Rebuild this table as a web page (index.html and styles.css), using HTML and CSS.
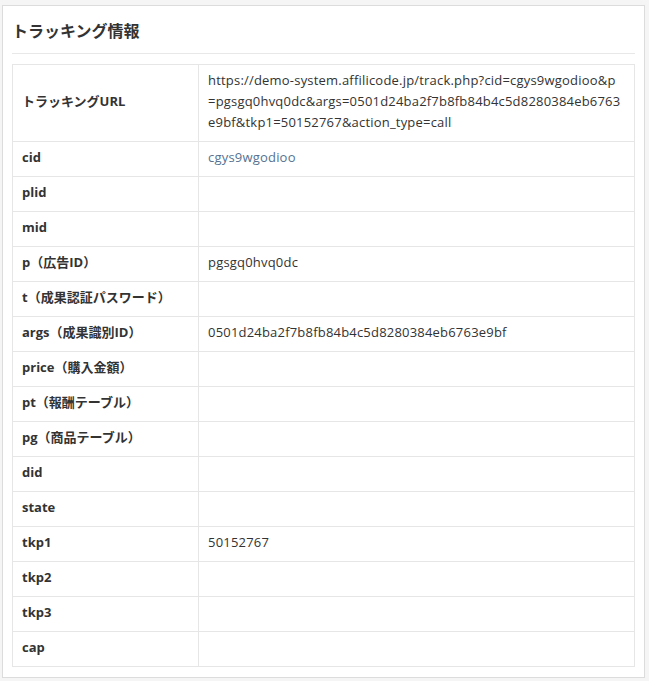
FILE: index.html
```html
<!DOCTYPE html>
<html lang="ja">
<head>
    <meta charset="UTF-8">
    <meta name="viewport" content="width=device-width, initial-scale=1.0">
    <title>トラッキング情報</title>
    <link rel="stylesheet" href="styles.css">
</head>
<body>
    <div class="panel">
        <h2 class="panel-title">トラッキング情報</h2>
        <table class="info-table">
            <tr>
                <th>トラッキングURL</th>
                <td class="url">https://demo-system.affilicode.jp/track.php?cid=cgys9wgodioo&amp;p=pgsgq0hvq0dc&amp;args=0501d24ba2f7b8fb84b4c5d8280384eb6763e9bf&amp;tkp1=50152767&amp;action_type=call</td>
            </tr>
            <tr>
                <th>cid</th>
                <td><a href="#" class="link">cgys9wgodioo</a></td>
            </tr>
            <tr><th>plid</th><td></td></tr>
            <tr><th>mid</th><td></td></tr>
            <tr><th>p（広告ID）</th><td>pgsgq0hvq0dc</td></tr>
            <tr><th>t（成果認証パスワード）</th><td></td></tr>
            <tr><th>args（成果識別ID）</th><td>0501d24ba2f7b8fb84b4c5d8280384eb6763e9bf</td></tr>
            <tr><th>price（購入金額）</th><td></td></tr>
            <tr><th>pt（報酬テーブル）</th><td></td></tr>
            <tr><th>pg（商品テーブル）</th><td></td></tr>
            <tr><th>did</th><td></td></tr>
            <tr><th>state</th><td></td></tr>
            <tr><th>tkp1</th><td>50152767</td></tr>
            <tr><th>tkp2</th><td></td></tr>
            <tr><th>tkp3</th><td></td></tr>
            <tr><th>cap</th><td></td></tr>
        </table>
    </div>
</body>
</html>
```

FILE: styles.css
```css
/* tracking info page */
body {
    margin: 0;
    padding: 5px 4px 4px 2px;
    background-color: #f5f5f5;
    font-family: "Open Sans", "Noto Sans CJK JP", sans-serif;
    font-size: 13px;
    color: #333;
}

.panel {
    background-color: #fff;
    border: 1px solid #dcdcdc;
    padding: 0 9px 10px;
}

.panel-title {
    margin: 0 0 10px;
    padding: 13px 0 12px;
    font-family: "Noto Sans CJK JP", sans-serif;
    font-size: 16px;
    line-height: 22px;
    font-weight: bold;
    color: #333;
    border-bottom: 1px solid #e8e8e8;
}

.info-table {
    width: 100%;
    border-collapse: collapse;
    border: 1px solid #e6e6e6;
}

.info-table th,
.info-table td {
    border: 1px solid #e6e6e6;
    padding: 5px 9px 8px;
    line-height: 21px;
    text-align: left;
    vertical-align: middle;
}

.info-table th {
    width: 167px;
    font-weight: bold;
}

.info-table td {
    font-weight: normal;
    letter-spacing: 0.2px;
}

.info-table td.url {
    padding-right: 13px;
    word-break: break-all;
}

.link {
    color: #557391;
    text-decoration: none;
}
```
